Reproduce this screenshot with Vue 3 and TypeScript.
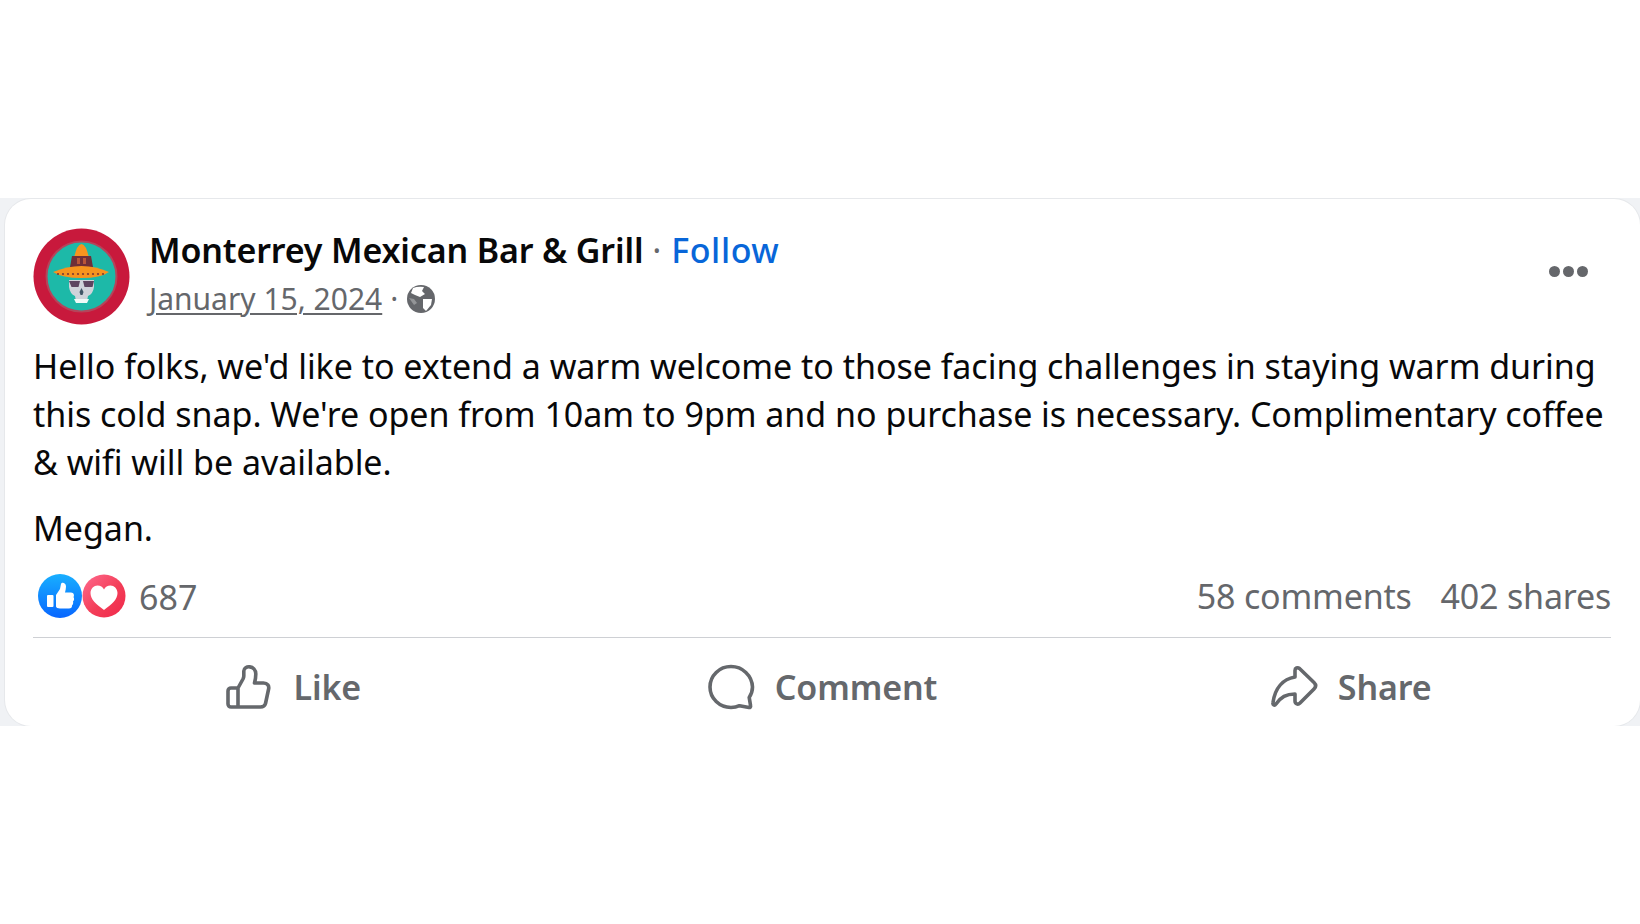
<script setup lang="ts">
const actions = [
  { label: 'Like', kind: 'like' },
  { label: 'Comment', kind: 'comment' },
  { label: 'Share', kind: 'share' },
]
const brimDots = [25, 30, 35, 40, 45, 50, 55, 60, 65, 70]
</script>

<template>
  <main class="page">
    <article class="card">
      <header class="head">
        <svg class="avatar" viewBox="0 0 97 97" aria-label="Monterrey logo">
          <circle cx="48.5" cy="48.5" r="48" fill="#c8193c" />
          <circle cx="48.5" cy="48.5" r="35" fill="#1db9a8" stroke="#b5445a" stroke-width="2" />
          <path d="M36 52h25v7q-1 7-6 9l-1 5h-11l-1-5q-5-2-6-9z" fill="#cfd3da" />
          <path d="M36 53h11l-1.500 6h-7zM50 53h11l-1.500 6h-8z" fill="#5d4560" />
          <path d="M46.500 64l2-4 2 4-1 3h-2z" fill="#3f5566" />
          <path d="M41 71h15l-2 4h-11z" fill="#eefaf7" />
          <path d="M41 30 Q44 16 48.500 16 Q53 16 56 30Z" fill="#f7941e" />
          <path d="M39 28h19l2 11h-23z" fill="#6f2f38" />
          <path d="M44 30h3v6h-3zM50 30h3v6h-3z" fill="#d9653a" opacity=".7" />
          <path d="M20 44 Q34 38 48.500 38 Q63 38 76 44 Q68 50 48.500 50 Q29 50 20 44Z" fill="#f7941e" />
          <circle v-for="x in brimDots" :key="x" :cx="x" cy="46" r="1.100" fill="#7d3a34" />
        </svg>
        <div class="who">
          <div class="title">
            <span class="name">Monterrey Mexican Bar &amp; Grill</span>
            <span class="sep"> · </span>
            <span class="follow">Follow</span>
          </div>
          <div class="meta">
            <span class="date">January 15, 2024</span>
            <span class="dot">·</span>
            <svg class="globe" viewBox="0 0 30 30" aria-hidden="true">
              <circle cx="15" cy="15" r="14" fill="#65676b" />
              <path d="M7 4 Q12 2 18 3 L16 7 L19 10 L14 13 L9 11 L5 9Z" fill="#fff" />
              <path d="M17 15 L26 15 L25 21 L20 27 L17 24Z" fill="#fff" />
              <path d="M3 14 L8 15 L11 19 L8 21Z" fill="#fff" opacity=".3" />
            </svg>
          </div>
        </div>
        <div class="more" aria-label="More">
          <i></i><i></i><i></i>
        </div>
      </header>

      <div class="body">
        <p>Hello folks, we'd like to extend a warm welcome to those facing challenges in staying warm during<br />this cold snap. We're open from 10am to 9pm and no purchase is necessary. Complimentary coffee<br />&amp; wifi will be available.</p>
        <p class="sign">Megan.</p>
      </div>

      <div class="stats">
        <div class="reactions">
          <svg class="react" viewBox="0 0 44 44" aria-hidden="true">
            <defs>
              <linearGradient id="likeGrad" x1="0" y1="0" x2="0" y2="1">
                <stop offset="0" stop-color="#18afff" />
                <stop offset="1" stop-color="#0866ff" />
              </linearGradient>
            </defs>
            <circle cx="22" cy="22" r="22" fill="url(#likeGrad)" />
            <path d="M10 21h4.500a1 1 0 0 1 1 1v10a1 1 0 0 1-1 1H10a1 1 0 0 1-1-1V22a1 1 0 0 1 1-1z" fill="#fff" />
            <path d="M18 21l4-6 1-5c.500-2 5-1.500 5 2.500 0 2-.500 4-1 6h6c3 0 3.500 3 2.500 4.500 1 1.500.800 3.500-.5 4.500.5 1.500 0 3-1 4 .2 2-1 3-3 3H22c-2 0-4-1-4-2z" fill="#fff" />
          </svg>
          <svg class="react" viewBox="0 0 44 44" aria-hidden="true">
            <defs>
              <linearGradient id="heartGrad" x1="0" y1="0" x2="1" y2="1">
                <stop offset="0" stop-color="#ff6b8f" />
                <stop offset=".55" stop-color="#f33e58" />
                <stop offset="1" stop-color="#f0284a" />
              </linearGradient>
            </defs>
            <circle cx="22" cy="22" r="21.500" fill="url(#heartGrad)" />
            <path d="M22 36C14 30 8.500 25.500 8.500 19c0-4.500 3.500-7.500 7-7.500 3 0 5.200 1.500 6.500 4 1.300-2.500 3.500-4 6.500-4 3.500 0 7 3 7 7.500 0 6.500-5.500 11-13.500 17z" fill="#fff" />
          </svg>
          <span class="count">687</span>
        </div>
        <div class="totals">
          <span>58 comments</span>
          <span>402 shares</span>
        </div>
      </div>

      <nav class="actions">
        <button v-for="a in actions" :key="a.kind" class="action" type="button">
          <svg v-if="a.kind === 'like'" class="icon" viewBox="0 0 48 46" aria-hidden="true">
            <path d="M13 24v19H6a3 3 0 0 1-3-3V27a3 3 0 0 1 3-3zM13 24l5-9c.5-1 .8-2 .8-3V7c0-6 12-6 12 3 0 3-.5 6-1.300 9h9c4 0 6 3 5 6.500l-3 14c-.7 2.500-2.500 3.500-5 3.500H13" fill="none" stroke="#65686c" stroke-width="3.600" stroke-linejoin="round" stroke-linecap="round" />
          </svg>
          <svg v-else-if="a.kind === 'comment'" class="icon" viewBox="0 0 48 46" aria-hidden="true">
            <path d="M24 2.500C12.500 2.500 3 11.500 3 23s9.500 20.500 21 20.500c3 0 6-.6 8.500-1.800l9.500 1.800c1 .2 1.800-.6 1.600-1.600l-1.400-8.500c2-3 3.300-6.700 3.300-10.400C45 11.500 35.500 2.500 24 2.500z" fill="none" stroke="#65686c" stroke-width="3.600" stroke-linejoin="round" />
          </svg>
          <svg v-else class="icon" viewBox="0 0 48 46" aria-hidden="true">
            <path d="M25 6.500c0-2.500 2.500-3.500 4.500-2L44 18.500c2 2 2 4.500 0 6.500L30 39c-2 2-5 1-5-2v-7c-9 0-14 3-19 10-1.500 2-3.500 1-3-1.500C5 24 13 15 25 13z" fill="none" stroke="#65686c" stroke-width="3.600" stroke-linejoin="round" />
          </svg>
          <span>{{ a.label }}</span>
        </button>
      </nav>
    </article>
  </main>
</template>

<style>
html, body { margin: 0; background: #fff; }
</style>

<style scoped>
.page {
  box-sizing: border-box;
  margin-top: 198px;
  height: 528px;
  background: #f0f2f5;
  padding: 1px 0 0 5px;
  overflow: hidden;
  font-family: "Noto Sans", "Open Sans", sans-serif;
  color: #080809;
}
.card {
  box-sizing: border-box;
  height: 527px;
  background: #fff;
  border-radius: 26px;
  box-shadow: 0 0 0 1px #e6e8eb;
  padding: 29px 29px 0 28px;
  display: flex;
  flex-direction: column;
}
.head { display: flex; align-items: flex-start; }
.avatar { width: 97px; height: 97px; flex: none; filter: blur(.6px); }
.who { margin-left: 19px; flex: 1; }
.title { font-size: 34px; line-height: 48px; white-space: pre; margin-top: -2px; }
.name { font-weight: 600; letter-spacing: -.15px; }
.sep { color: #65676b; }
.follow { color: #0866d9; font-weight: 500; letter-spacing: .6px; margin-left: 1px; }
.meta { display: flex; align-items: center; font-size: 30px; line-height: 48px; color: #65676b; margin-top: 1px; }
.date { text-decoration: underline; text-decoration-thickness: 2px; text-underline-offset: 3px; }
.dot { margin: 0 8px; }
.globe { width: 30px; height: 30px; }
.more { display: flex; gap: 3px; margin: 38px 23px 0 0; }
.more i { width: 11px; height: 11px; border-radius: 50%; background: #65676b; }
.body { font-size: 34px; line-height: 48px; margin-top: 17px; white-space: nowrap; letter-spacing: -.03px; }
.body p { margin: 0; }
.body .sign { margin-top: 18px; }
.stats {
  display: flex;
  justify-content: space-between;
  align-items: center;
  color: #65676b;
  font-size: 34px;
  height: 64px;
  margin-top: 12px;
  padding-bottom: 9px;
  border-bottom: 1.500px solid #ced0d4;
}
.reactions { display: flex; align-items: center; padding-left: 5px; }
.react { width: 44px; height: 44px; }
.count { margin: 2px 0 0 13px; }
.totals { display: flex; gap: 29px; letter-spacing: -.2px; }
.actions { display: grid; grid-template-columns: repeat(3, 1fr); column-gap: 8px; flex: 1; padding-top: 9px; }
.action {
  display: flex;
  align-items: center;
  justify-content: center;
  gap: 20px;
  background: none;
  border: 0;
  padding: 0;
  font: inherit;
  font-size: 34px;
  font-weight: 600;
  color: #65686c;
  letter-spacing: -.1px;
}
.icon { width: 48px; height: 46px; }
</style>
